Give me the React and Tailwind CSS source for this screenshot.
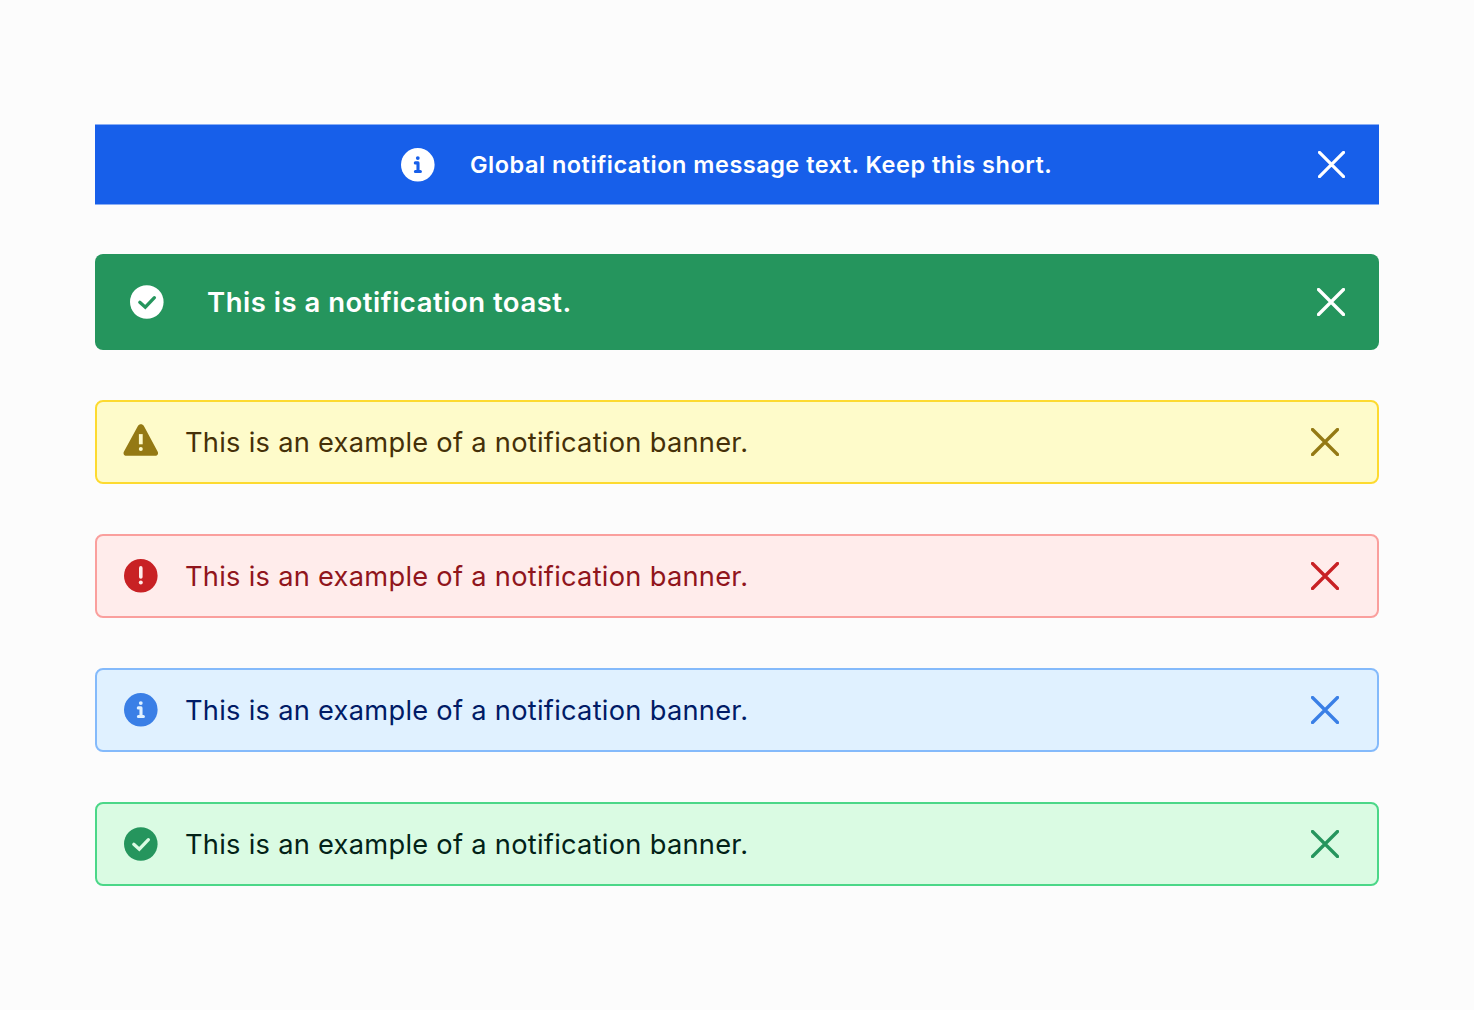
import clsx from "clsx";

const InfoIcon = ({ className }) => (
    <svg viewBox="0 0 34 34" className={clsx("size-[34px] shrink-0", className)}>
        <circle cx="16.8" cy="16.8" r="16.8" fill="currentColor" />
        <g className="fill-(--mark) stroke-(--mark)">
            <circle cx="16.8" cy="10.1" r="1.9" stroke="none" />
            <path d="M14.3 14.9H17V23.4M14.4 23.5H19.4" fill="none" strokeWidth="3.1" strokeLinecap="round" strokeLinejoin="round" />
        </g>
    </svg>
);

const CheckIcon = ({ className }) => (
    <svg viewBox="0 0 34 34" className={clsx("size-[34px] shrink-0", className)}>
        <circle cx="16.8" cy="17" r="16.8" fill="currentColor" />
        <path
            d="M9.8 17.3L15.3 22.2L24.4 12.7"
            className="stroke-(--mark)"
            fill="none"
            strokeWidth="3.3"
            strokeLinecap="round"
            strokeLinejoin="miter"
        />
    </svg>
);

const ErrorIcon = ({ className }) => (
    <svg viewBox="0 0 34 34" className={clsx("size-[34px] shrink-0", className)}>
        <circle cx="16.8" cy="16.8" r="16.8" fill="currentColor" />
        <path d="M16.8 8.9V17.9" className="stroke-(--mark)" strokeWidth="3.6" strokeLinecap="round" />
        <circle cx="16.8" cy="23.6" r="2" className="fill-(--mark)" />
    </svg>
);

const WarningIcon = ({ className }) => (
    <svg viewBox="0 0 34 34" className={clsx("mb-0.5 size-[34px] shrink-0 overflow-visible", className)}>
        <path
            d="M13.9 2C15.2 -0.4 18.6 -0.4 19.9 2L33.6 27.4C34.8 29.6 33.6 31.8 31.2 31.8H2.4C0 31.8 -1.2 29.6 0 27.4Z"
            fill="currentColor"
        />
        <path d="M16.8 10.1V20.3" className="stroke-(--mark)" strokeWidth="3.8" />
        <circle cx="16.8" cy="25" r="2" className="fill-(--mark)" />
    </svg>
);

const CloseButton = ({ className, size = "size-7" }) => (
    <button type="button" aria-label="Dismiss" className={clsx("flex size-8 items-center justify-center", className)}>
        <svg viewBox="0 0 28 28" className={clsx("shrink-0", size)}>
            <path d="M1.5 1.5L26.5 26.5M26.5 1.5L1.5 26.5" stroke="currentColor" strokeWidth="3.3" strokeLinecap="round" />
        </svg>
    </button>
);

const banners = [
    {
        icon: WarningIcon,
        box: "bg-[#fefbca] border-[#fdda30] [--mark:#fefbca]",
        accent: "text-[#947914]",
        text: "text-[#453008]",
    },
    {
        icon: ErrorIcon,
        box: "bg-[#ffeceb] border-[#fa9f9d] [--mark:#ffeceb]",
        accent: "text-[#c82124]",
        text: "text-[#90151c]",
    },
    {
        icon: InfoIcon,
        box: "bg-[#e0f1ff] border-[#84bafb] [--mark:#e0f1ff]",
        accent: "text-[#3a7fe6]",
        text: "text-[#001b66]",
    },
    {
        icon: CheckIcon,
        box: "bg-[#dafbe3] border-[#4bd788] [--mark:#dafbe3]",
        accent: "text-[#25955d]",
        text: "text-[#022217]",
    },
];

const Banner = ({ icon: Icon, box, accent, text }) => (
    <div className={clsx("flex h-21 items-center rounded-lg border-2 pr-9 pl-[27px]", box)}>
        <Icon className={accent} />
        <p className={clsx("ml-[27px] flex-1 pt-0.5 text-[27.25px] leading-9 tracking-[0.27px]", text)}>
            This is an example of a notification banner.
        </p>
        <CloseButton className={accent} />
    </div>
);

const App = () => {
    return (
        <div className="min-h-screen bg-[#fcfcfc] px-[95px] pt-[124px] font-['Inter',sans-serif]">
            {/* Global notification */}
            <div className="flex h-[81px] items-center border-y border-[#8aaef4] bg-[#175fea] pr-8 text-white [--mark:#175fea]">
                <div className="flex flex-1 items-center pl-[306px]">
                    <InfoIcon />
                    <p className="ml-[35px] text-[23.5px] leading-8 font-semibold tracking-[0.49px]">
                        Global notification message text. Keep this short.
                    </p>
                </div>
                <CloseButton size="size-[27px]" />
            </div>

            {/* Toast */}
            <div className="mt-[49px] flex h-24 items-center rounded-lg bg-[#25955d] pr-8 pl-[35px] text-white [--mark:#25955d]">
                <CheckIcon />
                <p className="ml-[43px] flex-1 text-[27.5px] leading-9 font-semibold tracking-[0.51px]">
                    This is a notification toast.
                </p>
                <CloseButton />
            </div>

            {/* Banners */}
            <div className="mt-[50px] flex flex-col gap-[50px]">
                {banners.map((banner, idx) => (
                    <Banner key={idx} {...banner} />
                ))}
            </div>
        </div>
    );
};

export default App;
